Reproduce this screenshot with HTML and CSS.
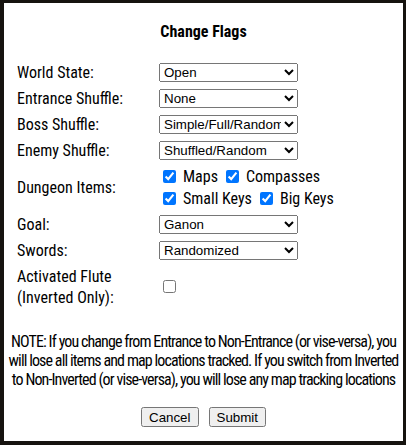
FILE: index.html
```html
<!DOCTYPE html>
<html>
<head>
<meta charset="utf-8">
<title>Change Flags</title>
<link rel="stylesheet" href="styles.css">
</head>
<body>
<div class="modal">
  <h2 class="title">Change Flags</h2>
  <div class="form">
    <div class="lbl">World State:</div>
    <div class="ctl"><select class="sel"><option>Open</option><option>Standard</option><option>Inverted</option></select></div>

    <div class="lbl">Entrance Shuffle:</div>
    <div class="ctl"><select class="sel"><option>None</option><option>Simple</option></select></div>

    <div class="lbl">Boss Shuffle:</div>
    <div class="ctl"><select class="sel"><option>Simple/Full/Random</option><option>None</option></select></div>

    <div class="lbl">Enemy Shuffle:</div>
    <div class="ctl"><select class="sel"><option>Shuffled/Random</option><option>None</option></select></div>

    <div class="lbl">Dungeon Items:</div>
    <div class="ctl checks">
      <div class="chkline">
        <input class="chk" type="checkbox" checked><span class="opt">Maps</span>
        <input class="chk" type="checkbox" checked><span class="opt">Compasses</span>
      </div>
      <div class="chkline">
        <input class="chk" type="checkbox" checked><span class="opt">Small Keys</span>
        <input class="chk" type="checkbox" checked><span class="opt">Big Keys</span>
      </div>
    </div>

    <div class="lbl">Goal:</div>
    <div class="ctl"><select class="sel"><option>Ganon</option><option>Fast Ganon</option></select></div>

    <div class="lbl">Swords:</div>
    <div class="ctl"><select class="sel"><option>Randomized</option><option>Assured</option></select></div>

    <div class="lbl lbl-two">Activated Flute<br>(Inverted Only):</div>
    <div class="ctl"><input class="chk" type="checkbox"></div>
  </div>
  <p class="note">NOTE: If you change from Entrance to Non-Entrance (or vise-versa), you<br>will lose all items and map locations tracked. If you switch from Inverted<br>to Non-Inverted (or vise-versa), you will lose any map tracking locations</p>
  <div class="actions">
    <button class="btn" type="button">Cancel</button>
    <button class="btn" type="button">Submit</button>
  </div>
</div>
</body>
</html>
```

FILE: styles.css
```css
html, body {
  margin: 0;
  padding: 0;
}

body {
  width: 406px;
  height: 445px;
  overflow: hidden;
  background: #16130f;
  font-family: "Roboto Condensed", Roboto, "Liberation Sans", sans-serif;
  color: #000;
}

.modal {
  box-sizing: border-box;
  margin: 3px 0 0 4px;
  width: 399px;
  height: 438px;
  background: #fff;
  padding-top: 19px;
}

.title {
  margin: 0;
  font-size: 16px;
  line-height: 19px;
  font-weight: 700;
  text-align: center;
}

.form {
  margin-top: 22px;
  padding-left: 13px;
  display: grid;
  grid-template-columns: 142px auto;
  row-gap: 7px;
  align-items: center;
}

.lbl {
  font-size: 16px;
  line-height: 19px;
  white-space: nowrap;
}

.lbl-two {
  line-height: 20.5px;
}

.ctl {
  font-size: 16px;
  line-height: 19px;
}

.sel {
  display: block;
  margin: 0;
  width: 139px;
  height: 19px;
  font-family: "Liberation Sans", Arial, sans-serif;
  font-size: 13.333px;
}

.checks {
  display: flex;
  flex-direction: column;
  row-gap: 3px;
}

.chkline {
  height: 19px;
  display: flex;
  align-items: center;
  white-space: nowrap;
}

.chk {
  flex: none;
  margin: 0 3px 0 4px;
  width: 13px;
  height: 13px;
}

.opt {
  flex: none;
  margin-left: 4px;
  margin-right: 4px;
}

.note {
  margin: 24px 0 0 0;
  font-size: 16px;
  letter-spacing: -0.9px;
  line-height: 19px;
  text-align: center;
  white-space: nowrap;
}

.actions {
  margin-top: 18px;
  display: flex;
  justify-content: center;
  column-gap: 10px;
}

.btn {
  margin: 0;
  height: 20px;
  font-family: "Liberation Sans", Arial, sans-serif;
  font-size: 13.333px;
  padding: 1px 6px;
}
```
